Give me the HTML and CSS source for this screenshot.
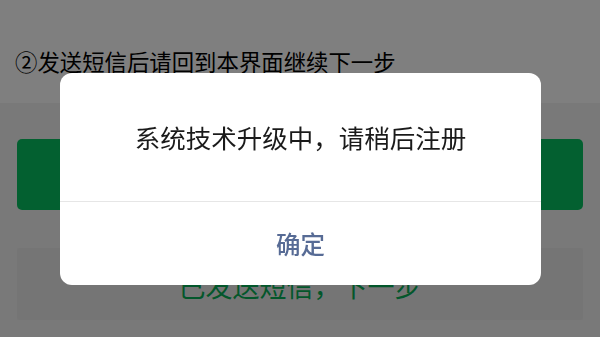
FILE: index.html
```html
<!DOCTYPE html>
<html lang="zh-CN">
<head>
<meta charset="utf-8">
<link rel="stylesheet" href="styles.css">
</head>
<body>
<div class="page">
  <section class="header">
    <p class="step">②发送短信后请回到本界面继续下一步</p>
  </section>
  <section class="actions">
    <div class="btn btn-primary"></div>
    <div class="btn btn-secondary">已发送短信，下一步</div>
  </section>
</div>
<div class="mask">
  <div class="dialog">
    <div class="dialog-body">系统技术升级中，请稍后注册</div>
    <div class="dialog-footer">确定</div>
  </div>
</div>
</body>
</html>
```
FILE: styles.css
```css
html, body {
  margin: 0;
  padding: 0;
  width: 600px;
  height: 337px;
  overflow: hidden;
  font-family: "Noto Sans CJK SC", "Noto Sans", sans-serif;
}
.page {
  height: 337px;
  background: #f2f2f2;
}
.header {
  height: 103px;
  background: #ffffff;
  padding: 0 0 0 15px;
  box-sizing: border-box;
  display: flex;
  align-items: flex-start;
}
.step {
  margin: 46px 0 0 0;
  font-size: 22.4px;
  line-height: 30px;
  color: #000;
}
.actions {
  padding: 36px 17px 0 17px;
  display: flex;
  flex-direction: column;
  gap: 38px;
}
.btn {
  height: 71px;
  border-radius: 5px;
  display: flex;
  align-items: center;
  justify-content: center;
}
.btn-primary {
  background: #07c160;
}
.btn-secondary {
  height: 72px;
  border-radius: 2px;
  background: #ebebeb;
  color: #06ae56;
  font-size: 27px;
  padding-top: 2px;
  box-sizing: border-box;
}
.mask {
  position: fixed;
  inset: 0;
  background: rgba(0, 0, 0, 0.5);
  display: flex;
  justify-content: center;
  align-items: flex-start;
  padding-top: 73px;
  padding-left: 1px;
  box-sizing: border-box;
}
.dialog {
  width: 481px;
  background: #fff;
  border-radius: 12px;
  overflow: hidden;
}
.dialog-body {
  height: 129px;
  box-sizing: border-box;
  display: flex;
  align-items: center;
  justify-content: center;
  font-size: 25.5px;
  color: #1a1a1a;
  border-bottom: 1px solid #e6e6e6;
  padding-bottom: 1px;
}
.dialog-footer {
  height: 83px;
  display: flex;
  align-items: center;
  justify-content: center;
  font-size: 24.5px;
  font-weight: 500;
  color: #576b95;
}
```
